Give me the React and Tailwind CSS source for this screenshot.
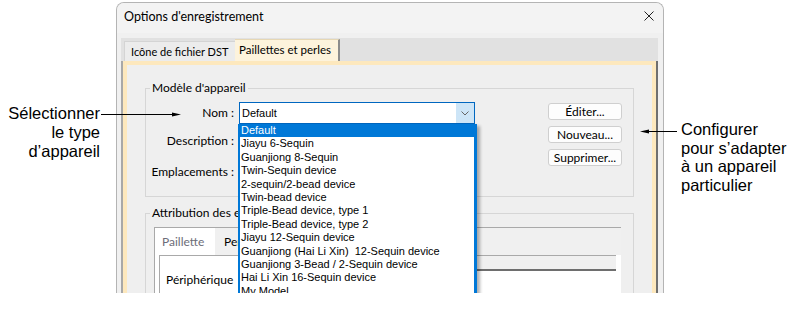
import React from 'react';

const items = [
    'Default',
    'Jiayu 6-Sequin',
    'Guanjiong 8-Sequin',
    'Twin-Sequin device',
    '2-sequin/2-bead device',
    'Twin-bead device',
    'Triple-Bead device, type 1',
    'Triple-Bead device, type 2',
    'Jiayu 12-Sequin device',
    'Guanjiong (Hai Li Xin)  12-Sequin device',
    'Guanjiong 3-Bead / 2-Sequin device',
    'Hai Li Xin 16-Sequin device',
    'My Model',
];

const Btn = ({ children }) => (
    <div className="h-[17px] w-[74px] rounded-[3px] border border-[#cfcfcf] bg-[#fdfdfd] text-center text-[12px] leading-[15px] text-black">
        {children}
    </div>
);

const App = () => {
    return (
        <div className="relative flex h-[309px] w-[801px] overflow-hidden bg-white font-['Lato','Noto_Sans',sans-serif]">
            {/* left callout */}
            <div className="w-[116px] shrink-0 pr-[16px] pt-[104px] text-right font-['Liberation_Sans',Arial,sans-serif] text-[16.5px] leading-[19px] text-black">
                <div>Sélectionner</div>
                <div>le type</div>
                <div>d’appareil</div>
            </div>

            {/* dialog */}
            <div className="mt-[2px] h-[291px] w-[548px] shrink-0 overflow-hidden rounded-t-[8px] border-x border-t border-[#b4b4b4] bg-[#f0f0f0]">
                <div className="flex h-[30px] items-start justify-between bg-[#f3f3f3] pl-[7px] pr-[9px]">
                    <span className="pt-[6px] text-[12.5px] leading-[16px] text-black">Options d'enregistrement</span>
                    <svg className="mt-[8px]" width="10" height="10" viewBox="0 0 10 10">
                        <path d="M0.5 0.5 L9.5 9.5 M9.5 0.5 L0.5 9.5" stroke="#222" strokeWidth="1" />
                    </svg>
                </div>

                <div className="pl-[4px] pr-[5px] pt-[5px]">
                    {/* tab strip */}
                    <div className="flex h-[23px] items-end bg-[#e1e1e1]">
                        <div className="ml-[3px] h-[20px] w-[111px] whitespace-nowrap border-l border-t border-[#d4d4d4] bg-[#ececec] pl-[6px] text-[11px] leading-[20px] text-black">
                            Icône de fichier DST
                        </div>
                        <div className="h-[22px] w-[105px] whitespace-nowrap border-r-2 border-t border-r-[#8c8c8c] border-t-[#e6d7b4] bg-[#fdf3dc] pl-[4px] text-[11.5px] leading-[20px] text-black">
                            Paillettes et perles
                        </div>
                    </div>

                    {/* tab panel */}
                    <div className="border-l-2 border-r-2 border-l-[#a8a8a8] border-r-[#6f6f6f]">
                        <div className="h-[240px] border-4 border-[#fde8bd] bg-[#efefef]">
                            {/* Modèle d'appareil */}
                            <div className="relative mx-[18px] mt-[23px] h-[109px] border border-[#d6d6d6]">
                                <span className="absolute -top-[9px] left-[4px] bg-[#efefef] px-[2px] text-[12px] leading-[16px] text-black">
                                    Modèle d'appareil
                                </span>
                                <div className="flex pt-[13px] text-[12px] text-black">
                                    <div className="flex w-[88px] flex-col items-end">
                                        <div className="flex h-[22px] items-center">Nom :</div>
                                        <div className="mt-[9px] leading-[16px]">Description :</div>
                                        <div className="mt-[15px] leading-[16px]">Emplacements :</div>
                                    </div>
                                    <div className="relative z-10 ml-[5px] flex h-[22px] w-[236px] border border-[#0067c0] bg-white">
                                        <div className="flex-1 pl-[2px] font-['Liberation_Sans',Arial,sans-serif] text-[11px] leading-[20px]">
                                            Default
                                        </div>
                                        <div className="flex w-[18px] items-center justify-center bg-[#cde5f7]">
                                            <svg width="8" height="5" viewBox="0 0 8 5">
                                                <path d="M0.5 0.5 L4 4 L7.5 0.5" fill="none" stroke="#666" strokeWidth="1" />
                                            </svg>
                                        </div>
                                        {/* open list */}
                                        <div className="absolute left-[-2px] top-[21px] h-[200px] w-[239px] border-l-2 border-r-[3px] border-[#0078d7] bg-white font-['Liberation_Sans',Arial,sans-serif] text-[11px] leading-[13.4px] shadow-[3px_2px_3px_rgba(0,0,0,0.3)]">
                                            {items.map((it, i) => (
                                                <div
                                                    key={i}
                                                    className={`whitespace-pre pl-[1px] ${i === 0 ? 'bg-[#0078d7] text-white' : 'text-black'}`}
                                                >
                                                    {it}
                                                </div>
                                            ))}
                                        </div>
                                    </div>
                                    <div className="ml-auto mr-[11px] mt-[1px] flex flex-col gap-[6px]">
                                        <Btn>Éditer...</Btn>
                                        <Btn>Nouveau...</Btn>
                                        <Btn>Supprimer...</Btn>
                                    </div>
                                </div>
                            </div>

                            {/* Attribution des emplacements */}
                            <div className="relative mx-[18px] mt-[16px] h-[100px] border border-[#d6d6d6]">
                                <span className="absolute -top-[9px] left-[4px] w-[89px] overflow-hidden whitespace-nowrap bg-[#efefef] pl-[2px] text-[12px] leading-[16px] text-black">
                                    Attribution des emplacements
                                </span>
                                <div className="ml-[8px] mr-[12px] mt-[13px] h-[80px] border-l border-t border-[#a9a9a9] bg-white text-[12px]">
                                    <div className="flex h-[27px]">
                                        <div className="w-[60px] pl-[7px] leading-[27px] text-[#6d6d78]">Paillette</div>
                                        <div className="flex-1 bg-[#f0f0f0] pl-[9px] leading-[27px] text-black">
                                            <span className="block w-[15px] overflow-hidden whitespace-nowrap">Perle</span>
                                        </div>
                                    </div>
                                    <div className="ml-[4px] mr-[5px] flex h-[60px] border-l border-t border-[#a9a9a9]">
                                        <div className="w-[80px] pl-[6px] pt-[16px] leading-[16px] text-black">Périphérique</div>
                                        <div className="h-[15px] flex-1 border-b-2 border-[#6e6e6e] bg-[#f0f0f0]" />
                                    </div>
                                </div>
                            </div>
                        </div>
                    </div>
                </div>
            </div>

            {/* right callout */}
            <div className="flex-1 pl-[17px] pt-[120px] font-['Liberation_Sans',Arial,sans-serif] text-[16.5px] leading-[18.7px] text-black">
                <div>Configurer</div>
                <div>pour s’adapter</div>
                <div>à un appareil</div>
                <div>particulier</div>
            </div>

            {/* leader arrows */}
            <svg className="pointer-events-none absolute left-0 top-0 z-20" width="801" height="309" viewBox="0 0 801 309">
                <line x1="101" y1="114.5" x2="174" y2="114.5" stroke="#000" strokeWidth="1" />
                <polygon points="181,114.5 172,112.5 172,116.5" fill="#000" />
                <line x1="648" y1="131.5" x2="677" y2="131.5" stroke="#000" strokeWidth="1" />
                <polygon points="640,131.5 649,129.5 649,133.5" fill="#000" />
            </svg>
        </div>
    );
};

export default App;
